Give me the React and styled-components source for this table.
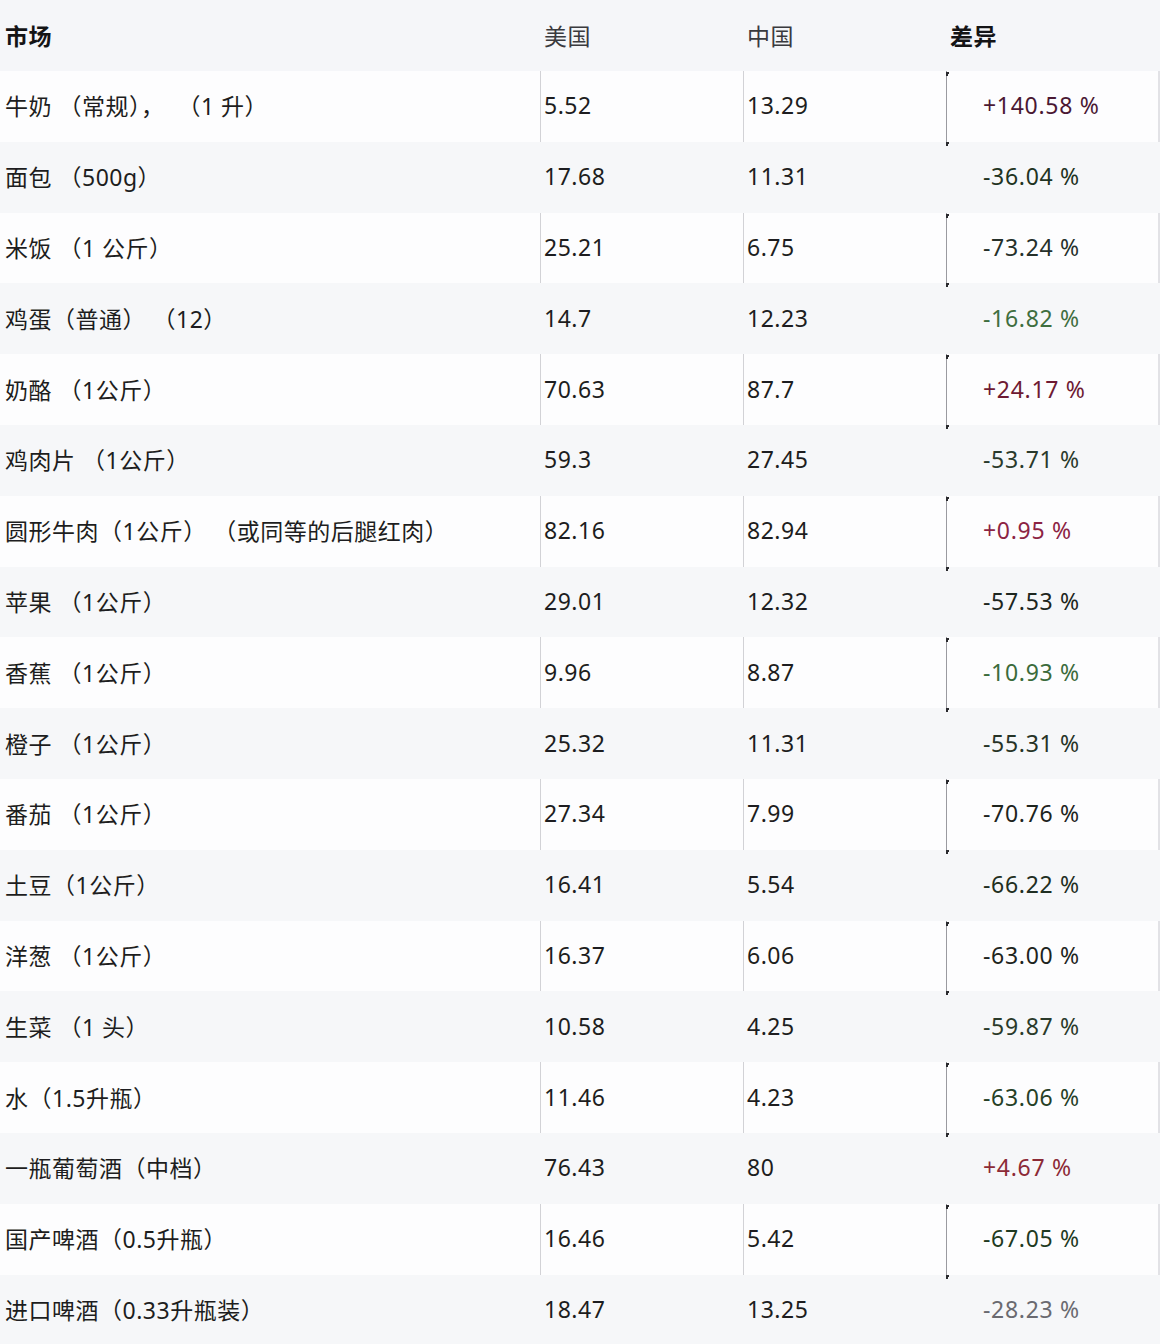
import React from 'react'
import styled, { createGlobalStyle } from 'styled-components'

const GlobalStyle = createGlobalStyle`
  html, body {
    margin: 0;
    padding: 0;
    background: #fdfdfe;
  }
  body {
    font-family: 'Noto Sans', 'Noto Sans CJK SC', sans-serif;
    color: #1d1d20;
  }
`

const Table = styled.div`
  width: 1160px;
  display: flex;
  flex-direction: column;
`

const Row = styled.div`
  display: grid;
  grid-template-columns: 540px 203px 203px 1fr;
  height: ${p => (p.$head ? '71px' : '70.8px')};
  background: ${p => (p.$head ? '#f5f6f9' : p.$striped ? '#f6f7f9' : '#fdfdfe')};
  border-right: ${p => (p.$lined ? '2px solid #e2e2e6' : '2px solid transparent')};
`

const Cell = styled.div`
  position: relative;
  display: flex;
  align-items: center;
  padding-left: ${p => (p.$first ? '5px' : '4px')};
  padding-bottom: 2px;
  font-size: 23px;
  letter-spacing: 0.5px;
  white-space: pre;
  font-weight: ${p => (p.$bold ? 700 : 400)};
  color: ${p => p.$color || '#1d1d20'};
  box-shadow: ${p => (p.$lined ? 'inset 1px 0 0 #d2d2d6' : 'none')};
`

const HeadCell = styled(Cell)`
  color: ${p => (p.$bold ? '#141416' : '#3a3a3e')};
`

const DiffCell = styled(Cell)`
  padding-left: 37px;
  letter-spacing: 0.7px;
  box-shadow: ${p => (p.$lined ? 'inset 1px 0 0 #9a9aa0' : 'none')};
`

const Tick = styled.span`
  position: absolute;
  left: 0;
  width: 3px;
  height: 4px;
  border-top: 2px solid #2a2a2e;
  border-left: 2px solid #2a2a2e;
  box-sizing: border-box;
  top: ${p => (p.$bottom ? 'auto' : '1px')};
  bottom: ${p => (p.$bottom ? '-4px' : 'auto')};
  display: ${p => (p.$show ? 'block' : 'none')};
`

const rows = [
  ['牛奶 （常规），  （1 升）', '5.52', '13.29', '+140.58 %', '#4a1833'],
  ['面包 （500g）', '17.68', '11.31', '-36.04 %', '#1f3322'],
  ['米饭 （1 公斤）', '25.21', '6.75', '-73.24 %', '#25302a'],
  ['鸡蛋（普通） （12）', '14.7', '12.23', '-16.82 %', '#3f6e3f'],
  ['奶酪 （1公斤）', '70.63', '87.7', '+24.17 %', '#6e1a33'],
  ['鸡肉片 （1公斤）', '59.3', '27.45', '-53.71 %', '#2a3a2c'],
  ['圆形牛肉（1公斤） （或同等的后腿红肉）', '82.16', '82.94', '+0.95 %', '#8c2343'],
  ['苹果 （1公斤）', '29.01', '12.32', '-57.53 %', '#1d2620'],
  ['香蕉 （1公斤）', '9.96', '8.87', '-10.93 %', '#3b6b3b'],
  ['橙子 （1公斤）', '25.32', '11.31', '-55.31 %', '#263326'],
  ['番茄 （1公斤）', '27.34', '7.99', '-70.76 %', '#1d241d'],
  ['土豆（1公斤）', '16.41', '5.54', '-66.22 %', '#1f2e22'],
  ['洋葱 （1公斤）', '16.37', '6.06', '-63.00 %', '#1d241d'],
  ['生菜 （1 头）', '10.58', '4.25', '-59.87 %', '#2a3a2a'],
  ['水（1.5升瓶）', '11.46', '4.23', '-63.06 %', '#264026'],
  ['一瓶葡萄酒（中档）', '76.43', '80', '+4.67 %', '#8c2a36'],
  ['国产啤酒（0.5升瓶）', '16.46', '5.42', '-67.05 %', '#1f3a22'],
  ['进口啤酒（0.33升瓶装）', '18.47', '13.25', '-28.23 %', '#6a6a70'],
]

const App = () => {
  return (
    <>
      <GlobalStyle />
      <Table>
        <Row $head>
          <HeadCell $first $bold>市场</HeadCell>
          <HeadCell>美国</HeadCell>
          <HeadCell>中国</HeadCell>
          <HeadCell $bold>差异</HeadCell>
        </Row>
        {rows.map(([name, us, cn, diff, tone], i) => {
          const lined = i % 2 === 0
          return (
            <Row key={name} $striped={!lined} $lined={lined}>
              <Cell $first>{name}</Cell>
              <Cell $lined={lined}>{us}</Cell>
              <Cell $lined={lined}>{cn}</Cell>
              <DiffCell $lined={lined} $color={tone}>
                <Tick $show={lined} />
                <Tick $show={lined} $bottom />
                {diff}
              </DiffCell>
            </Row>
          )
        })}
      </Table>
    </>
  )
}

export default App
